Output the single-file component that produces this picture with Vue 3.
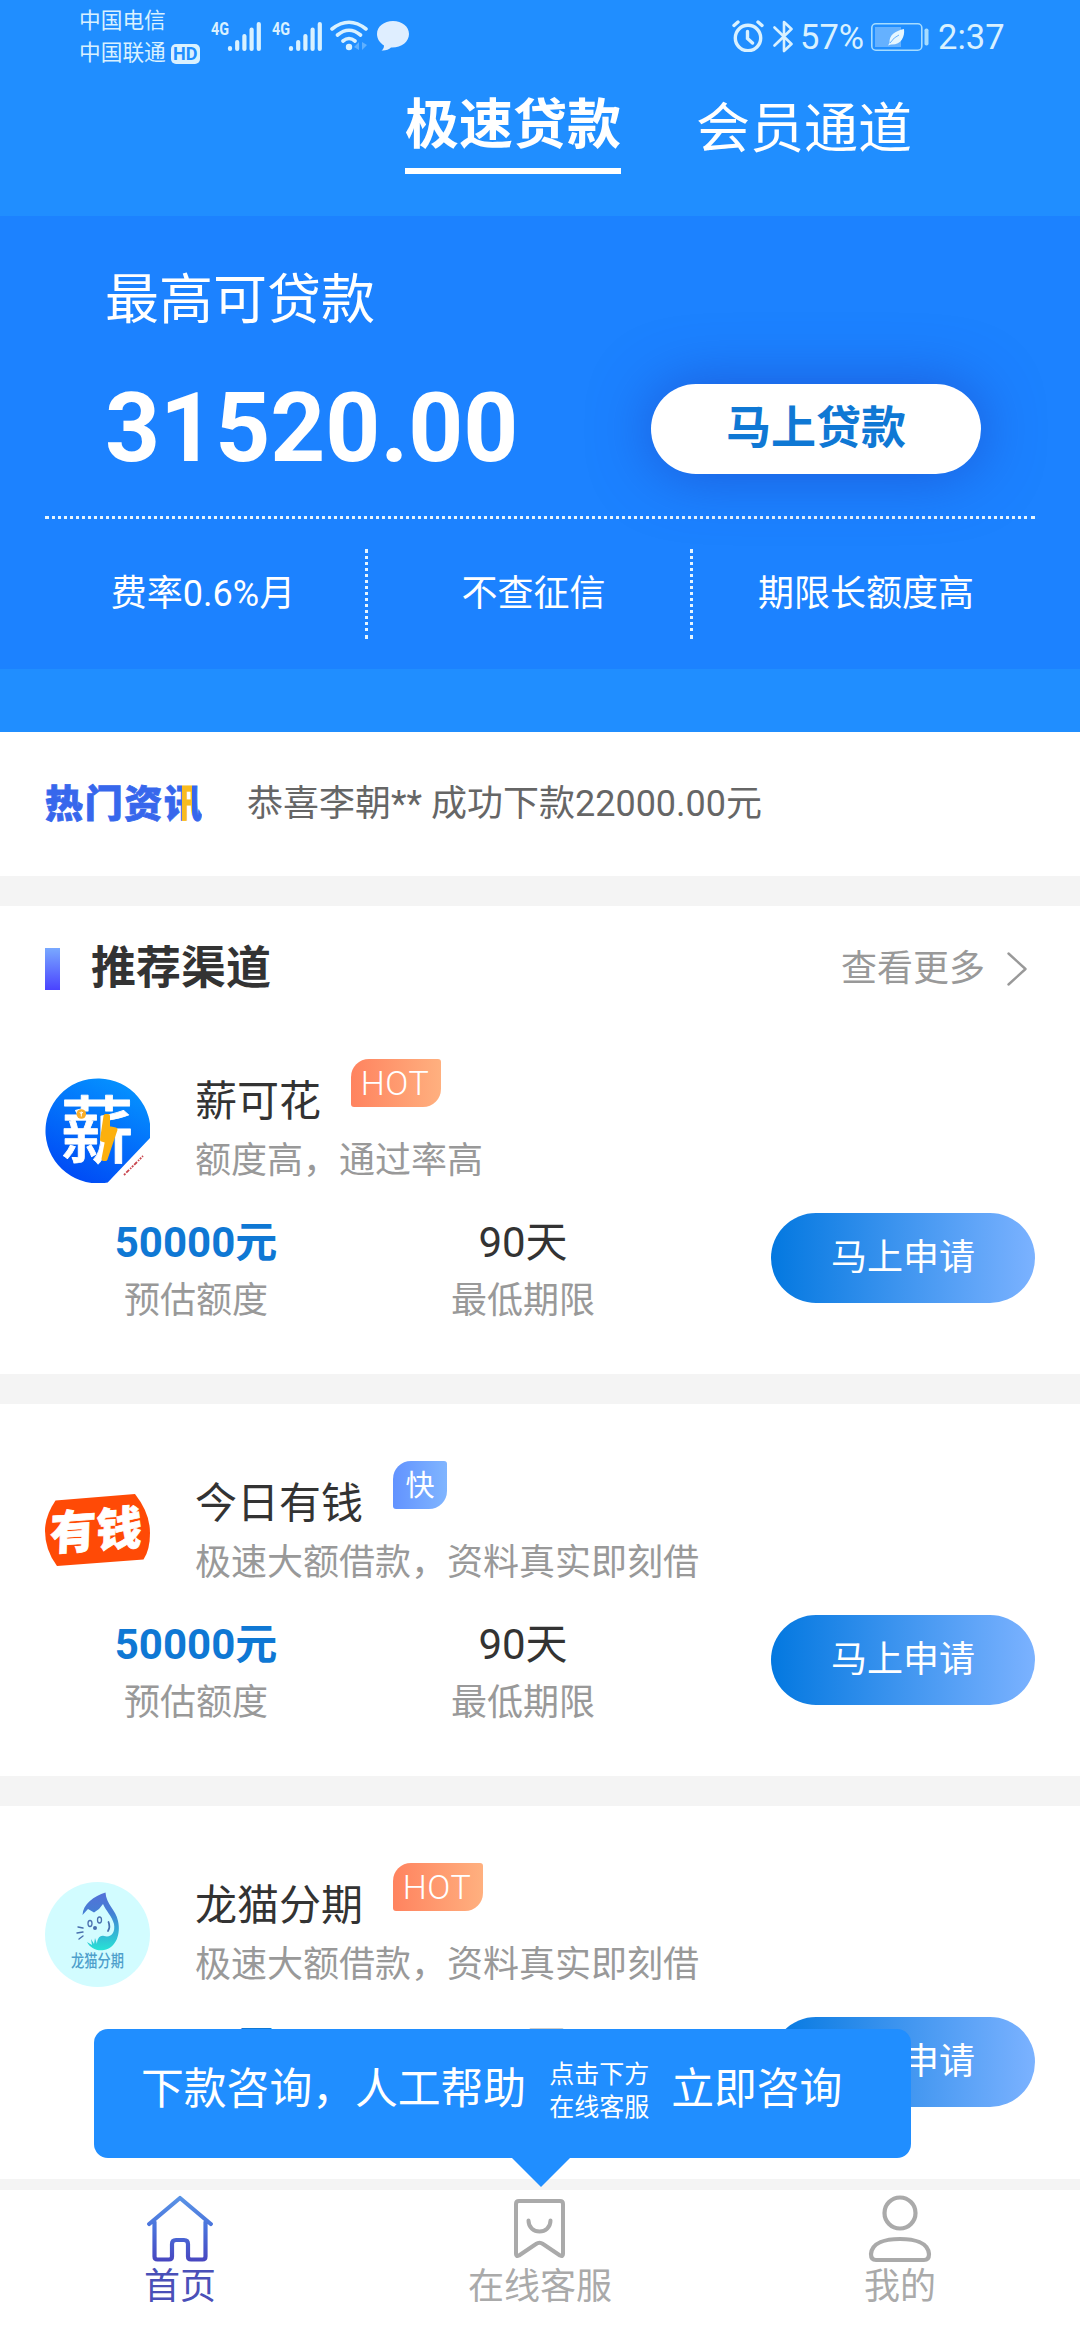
<script setup>
const offers = [
  { id: 'xin', name: '薪可花', tag: 'HOT', tagType: 'hot', desc: '额度高，通过率高', amount: '50000元', term: '90天' },
  { id: 'qian', name: '今日有钱', tag: '快', tagType: 'fast', desc: '极速大额借款，资料真实即刻借', amount: '50000元', term: '90天' },
  { id: 'mao', name: '龙猫分期', tag: 'HOT', tagType: 'hot', desc: '极速大额借款，资料真实即刻借', amount: '50000元', term: '90天' },
]
</script>

<template>
  <div class="screen">
    <header class="top">
      <div class="status">
        <div class="carriers">
          <div class="carrier">中国电信</div>
          <div class="carrier">中国联通<span class="hd">HD</span></div>
        </div>
        <svg v-for="n in 2" :key="n" class="signal" viewBox="0 0 61 42" width="61" height="42">
          <text x="0" y="22" font-size="19" font-weight="700" textLength="18" lengthAdjust="spacingAndGlyphs">4G</text>
          <g stroke="#d9f1ff" stroke-width="4.2" stroke-linecap="round">
            <path d="M19 35v1M26.2 29v7M33.4 23v13M40.6 16.500v19.500M47.800 11v25" />
          </g>
        </svg>
        <svg class="wifi" viewBox="0 0 38 32" width="38" height="32" fill="none" stroke="#d9f1ff" stroke-width="3.600" stroke-linecap="round">
          <path d="M2 9Q19-4.500 36 9M7.500 15Q19 5.500 30.500 15M13 21Q19 16 25 21" />
          <circle cx="19" cy="27" r="3.200" fill="#d9f1ff" stroke="none" />
          <path d="M24 27l5-5v8zM32 22v8l5-5z" fill="#5fb0ff" stroke="none" />
        </svg>
        <svg class="chat" viewBox="0 0 32 31" width="32" height="31">
          <path d="M16 0C7 0 0 5.500 0 13c0 5 3 9 7 11.500C7 27 6 28.500 4.500 29.500 8 30 12 28.500 14 26.500 24 27 32 21 32 13 32 5.500 25 0 16 0z" fill="#dfeeff" />
        </svg>
        <svg class="alarm" viewBox="0 0 32 32" width="32" height="32" fill="none" stroke="#d9f1ff" stroke-width="3.400" stroke-linecap="round">
          <circle cx="16" cy="18" r="12.700" />
          <path d="M15.500 11.500v7l5 4.500M2 5.500l4-3.500M30 5.500L26 2" />
        </svg>
        <svg class="bt" viewBox="0 0 20 33" width="20" height="33" fill="none" stroke="#d9f1ff" stroke-width="2.600" stroke-linejoin="round" stroke-linecap="round">
          <path d="M1.500 7.500L18.500 24 11 31V2l7.500 7L1.500 25.500" />
        </svg>
        <span class="pct">57%</span>
        <svg class="battery" viewBox="0 0 58 28" width="58" height="28">
          <rect x=".8" y=".8" width="50" height="26.400" rx="4" fill="none" stroke="#a6dcff" stroke-width="1.600" />
          <rect x="4" y="4" width="26" height="20" fill="#65b1ff" />
          <path d="M33 6C24 8 18 12 18.500 20l-1.500 2.500 3-1C30 22 34 14 33 6z" fill="#e6f6ff" />
          <path d="M19 20q4-6 9-8" fill="none" stroke="#65b1ff" stroke-width="1" />
          <rect x="53.500" y="5.500" width="4" height="17" rx="1.800" fill="#a6dcff" />
        </svg>
        <span class="clock">2:37</span>
      </div>
      <nav class="tabs">
        <a class="tab active">极速贷款</a>
        <a class="tab">会员通道</a>
      </nav>
    </header>

    <section class="hero">
      <div class="hero-label">最高可贷款</div>
      <div class="hero-row">
        <div class="hero-amount">31520.00</div>
        <button class="hero-btn">马上贷款</button>
      </div>
      <div class="perks">
        <div class="perk first">费率0.6%月</div>
        <div class="perk second">不查征信</div>
        <div class="perk third">期限长额度高</div>
      </div>
    </section>

    <section class="news">
      <svg class="news-logo" viewBox="0 0 157 44" width="157" height="44">
        <defs>
          <linearGradient id="newsFill" gradientUnits="userSpaceOnUse" x1="0" y1="0" x2="157" y2="0">
            <stop offset=".87" stop-color="#3767ec" />
            <stop offset=".87" stop-color="#f8bb20" />
            <stop offset=".935" stop-color="#f8bb20" />
            <stop offset=".935" stop-color="#3767ec" />
          </linearGradient>
        </defs>
        <text x="0" y="34.500" font-size="38" font-weight="900" textLength="157" fill="url(#newsFill)" stroke="url(#newsFill)" stroke-width=".8">热门资讯</text>
      </svg>
      <div class="news-text">恭喜李朝** 成功下款22000.00元</div>
    </section>

    <section class="list">
      <div class="list-head">
        <i class="mark"></i>
        <h2>推荐渠道</h2>
        <span class="more">查看更多</span>
        <svg class="chev" viewBox="0 0 20 34" width="20" height="34" fill="none" stroke="#999" stroke-width="2.400" stroke-linecap="round" stroke-linejoin="round">
          <path d="M1.500 1.500L18.500 17 1.500 32.500" />
        </svg>
      </div>

      <article v-for="o in offers" :key="o.id" class="card">
        <div class="card-top">
          <svg v-if="o.id === 'xin'" class="logo" viewBox="0 0 105 105" width="105" height="105">
            <defs>
              <linearGradient id="xinBg" x1=".25" y1="1" x2=".75" y2="0">
                <stop offset="0" stop-color="#0048f5" />
                <stop offset="1" stop-color="#0594ff" />
              </linearGradient>
            </defs>
            <path d="M105 60A52.500 52.500 0 1 0 62.700 104.500Z" fill="url(#xinBg)" />
            <text x="15.500" y="79" font-size="73" font-weight="500" fill="#fff" stroke="#fff" stroke-width=".8" stroke-linejoin="round">薪</text>
            <circle cx="36.300" cy="36" r="4.800" fill="#f8ae2b" />
            <path d="M36.300 33.500v5M34.800 34l1.500 2 1.500-2" stroke="#fff" stroke-width="1" fill="none" />
            <path d="M60.500 38L63 38 63 50 70.500 51.500 60.500 81 58.500 81 62 63 57 61.500Z" fill="#fcb00e" stroke="#fcb00e" stroke-width="4" stroke-linejoin="round" />
            <path d="M79 97L98 78" stroke="#c9474f" stroke-width="1.800" stroke-dasharray="2 1.200 4 1.500 1.500 1" />
          </svg>
          <svg v-else-if="o.id === 'qian'" class="logo" viewBox="0 0 105 105" width="105" height="105">
            <path d="M10.500 20.500L90 14Q105 33 105 53 105 70 98.500 79.500L12 86Q0 70 0 51 0 36 10.500 20.500Z" fill="#ff4a06" />
            <g transform="rotate(-4 52 52) skewX(-6)">
              <text x="10.500" y="67" font-size="46" font-weight="900" fill="#fff" stroke="#fff" stroke-width=".8">有钱</text>
            </g>
          </svg>
          <svg v-else class="logo" viewBox="0 0 105 105" width="105" height="105">
            <defs>
              <linearGradient id="maoDrop" x1="0" y1="0" x2="0" y2="1">
                <stop offset="0" stop-color="#5470d8" />
                <stop offset=".35" stop-color="#447fd4" />
                <stop offset="1" stop-color="#27e3d6" />
              </linearGradient>
            </defs>
            <circle cx="52.500" cy="52.500" r="52.500" fill="#d2fcff" />
            <path d="M60.500 10.500C49 14 38 22 37.500 33L43 27 49 30.500 54 27 58 22C61 29 67 34 69 42 70.500 51 66 56 59 54 54 53 52 58 52 62L50 56 49 62 46 57 47 63 42 60C45 66 52 69.500 59 68 71 66 76 52 73 39 71 28 61 22 60.500 10.500Z" fill="url(#maoDrop)" />
            <g fill="none" stroke="#496fae" stroke-width="1.400" stroke-linecap="round">
              <path d="M33 45l5 1M32 51l6-1M34 57l4-3" />
              <path d="M63 49q2.500-4 .5-9" stroke-width="1.800" />
            </g>
            <ellipse cx="45" cy="41.500" rx="2" ry="3" fill="none" stroke="#496fae" stroke-width="1.300" />
            <ellipse cx="54.500" cy="38" rx="2" ry="3" fill="none" stroke="#496fae" stroke-width="1.300" />
            <circle cx="50" cy="46" r="2" fill="#496fae" />
            <text x="26" y="84.500" font-size="16.500" font-weight="500" textLength="53" lengthAdjust="spacingAndGlyphs" fill="#4e9fcb">龙猫分期</text>
          </svg>
          <div class="card-title">
            <div class="name-row">
              <span class="name">{{ o.name }}</span>
              <span class="tag" :class="o.tagType">{{ o.tag }}</span>
            </div>
            <div class="desc">{{ o.desc }}</div>
          </div>
        </div>
        <div class="card-bottom">
          <div class="stat amount">
            <div class="value">{{ o.amount }}</div>
            <div class="label">预估额度</div>
          </div>
          <div class="stat term">
            <div class="value">{{ o.term }}</div>
            <div class="label">最低期限</div>
          </div>
          <button class="apply">马上申请</button>
        </div>
      </article>
    </section>

    <aside class="tip">
      <span class="tip-main">下款咨询，人工帮助</span>
      <span class="tip-small">点击下方<br />在线客服</span>
      <span class="tip-main">立即咨询</span>
      <svg class="tip-arrow" viewBox="0 0 60 30" width="60" height="30"><path d="M0 0H60L30 30Z" fill="#208eff" /></svg>
    </aside>

    <footer class="bottom-nav">
      <div class="nav-item current">
        <svg viewBox="0 0 66 68" width="66" height="68" fill="none" stroke="url(#homeStroke)" stroke-width="4.200" stroke-linecap="round" stroke-linejoin="round">
          <defs>
            <linearGradient id="homeStroke" gradientUnits="userSpaceOnUse" x1="0" y1="0" x2="0" y2="66">
              <stop offset="0" stop-color="#5b96e6" />
              <stop offset=".5" stop-color="#4a72dc" />
              <stop offset="1" stop-color="#4847c0" />
            </linearGradient>
          </defs>
          <path d="M2.200 29L33 3 63.800 29M7.500 27v34.500q0 3 3 3H22q3 0 3-3V49q0-4 4-4h8q4 0 4 4v12.500q0 3 3 3h11.500q3 0 3-3V27" />
        </svg>
        <span>首页</span>
      </div>
      <div class="nav-item">
        <svg viewBox="0 0 66 68" width="66" height="68" fill="none" stroke="#aaa" stroke-width="4" stroke-linecap="round" stroke-linejoin="round">
          <path d="M12 6h41q3 0 3 3V59q0 3-3 1.500L36 49q-3.500-2.500-7 0L12 60.500Q9 62 9 59V9q0-3 3-3zM21.500 25.500c0 14.500 22 14.500 22 0" />
        </svg>
        <span>在线客服</span>
      </div>
      <div class="nav-item">
        <svg viewBox="0 0 66 68" width="66" height="68" fill="none" stroke="#aaa" stroke-width="4.200" stroke-linejoin="round">
          <circle cx="33" cy="18" r="15.500" />
          <path d="M9 65h48q5 0 5-6C61 47.500 47 44 33 44S5 47.500 4 59q0 6 5 6z" />
        </svg>
        <span>我的</span>
      </div>
    </footer>
  </div>
</template>

<style>
body {
  margin: 0;
  background: #fff;
}
</style>

<style scoped>
.screen {
  position: relative;
  width: 1080px;
  height: 2340px;
  overflow: hidden;
  background: #fff;
  color: #333;
  font-family: Roboto, "Noto Sans CJK SC", sans-serif;
  display: flex;
  flex-direction: column;
}
.screen * { box-sizing: border-box; }
svg { display: block; flex: none; }
button { border: 0; padding: 0; font-family: inherit; flex: none; }

.top {
  flex: none;
  height: 216px;
  background: #208eff;
}
.status {
  height: 75px;
  padding-left: 79px;
  display: flex;
  align-items: flex-start;
  color: #d9f1ff;
}
.carriers {
  width: 132px;
  padding-top: 5px;
  font-size: 21.700px;
  line-height: 32px;
}
.carrier { height: 32px; display: flex; align-items: center; white-space: nowrap; }
.hd {
  width: 29px;
  height: 20px;
  margin: 1px 0 0 5px;
  border-radius: 5px;
  background: #d9f1ff;
  color: #208eff;
  font-size: 18px;
  font-weight: 700;
  line-height: 20px;
  text-align: center;
}
.signal { margin-top: 13px; fill: #d9f1ff; overflow: visible; }
.wifi { margin: 20px 0 0 -3px; }
.chat { margin: 21px 0 0 9px; }
.alarm { margin: 20px 0 0 323px; }
.bt { margin: 20px 0 0 9px; }
.pct, .clock { font-size: 34.500px; line-height: 40px; margin-top: 17px; }
.pct { width: 78px; padding-left: 7px; flex: none; }
.battery { margin-top: 23px; }
.clock { margin-left: 9px; }

.tabs {
  display: flex;
  gap: 75px;
  padding-left: 405px;
  color: #fff;
}
.tab {
  height: 105px;
  font-size: 54px;
  line-height: 110px;
}
.tab.active {
  height: 99px;
  line-height: 101px;
  font-weight: 700;
  border-bottom: 6px solid #fff;
}

.hero {
  flex: none;
  height: 516px;
  padding: 48px 45px 0;
  color: #fff;
  background: linear-gradient(#1c82ff 453px, #208eff 453px);
}
.hero-label {
  padding-left: 60px;
  height: 72px;
  line-height: 74px;
  font-size: 54px;
}
.hero-row {
  height: 183px;
  display: flex;
  justify-content: space-between;
  padding: 48px 54px 0 60px;
  border-bottom: 3px dotted #e6f5ff;
}
.hero-amount {
  font-size: 96px;
  line-height: 88px;
  font-weight: 700;
}
.hero-btn {
  width: 330px;
  height: 90px;
  border-radius: 45px;
  background: #fff;
  color: #0f78d4;
  font-size: 45px;
  font-weight: 700;
  line-height: 90px;
  box-shadow: 0 0 60px rgba(28, 62, 190, .6);
}
.perks {
  display: flex;
  padding-top: 30px;
}
.perk {
  height: 90px;
  line-height: 90px;
  font-size: 36px;
  text-align: center;
}
.perk.first { width: 323px; padding-right: 4px; border-right: 3px dotted #e6f5ff; }
.perk.second { width: 325px; padding-left: 9px; border-right: 3px dotted #e6f5ff; }
.perk.third { width: 342px; padding-left: 4px; }

.news {
  flex: none;
  height: 174px;
  display: flex;
  align-items: center;
  padding: 0 45px;
  border-bottom: 30px solid #f4f4f4;
}
.news-text {
  margin-left: 45px;
  font-size: 36px;
  line-height: 54px;
  color: #666;
}

.list-head {
  height: 129px;
  display: flex;
  align-items: center;
  padding: 0 53px 3px 45px;
}
.mark {
  width: 15px;
  height: 42px;
  background: linear-gradient(#79a9ff, #4a43ff);
}
h2 {
  margin: 0 auto 0 31px;
  font-size: 45px;
  line-height: 60px;
}
.more { font-size: 36px; line-height: 54px; color: #999; }
.chev { margin-left: 22px; }

.card {
  height: 402px;
  border-bottom: 30px solid #f4f4f4;
  padding: 42px 45px 0;
}
.card:nth-of-type(1) { height: 369px; padding-top: 9px; }
.card:nth-of-type(3) { height: 403px; }
.card-top { display: flex; height: 153px; }
.logo { margin-top: 34px; }
.card-title { margin-left: 45px; }
.name-row { height: 86px; display: flex; align-items: flex-start; }
.name { font-size: 42px; line-height: 60px; margin-top: 28px; }
.tag {
  height: 48px;
  margin: 15px 0 0 30px;
  border-radius: 18px 3px 18px 3px;
  color: #fff;
  line-height: 48px;
  text-align: center;
}
.tag.hot {
  width: 90px;
  padding-right: 2px;
  font-size: 34px;
  font-weight: 300;
  letter-spacing: .6px;
  background: linear-gradient(90deg, #ff835f, #ffb07f);
}
.tag.fast { width: 54px; font-size: 29px; line-height: 50px; background: linear-gradient(90deg, #6293ff, #80b5ff); }
.desc { font-size: 36px; line-height: 54px; color: #999; margin-top: 4px; }
.card-bottom { display: flex; }
.stat { text-align: center; }
.amount { width: 302px; }
.term { width: 352px; }
.value { font-size: 42px; line-height: 60px; padding-top: 16px; }
.amount .value { color: #0f78d4; font-weight: 700; }
.label { font-size: 36px; line-height: 54px; color: #999; padding-top: 1px; }
.apply {
  width: 264px;
  height: 90px;
  margin: 16px 0 0 72px;
  border-radius: 45px;
  background: linear-gradient(90deg, #0378e0, #7bb2ff);
  color: #fff;
  font-size: 36px;
  line-height: 90px;
}

.tip {
  position: absolute;
  z-index: 2;
  left: 94px;
  top: 2029px;
  width: 817px;
  height: 129px;
  border-radius: 14px;
  background: #208eff;
  color: #fff;
  display: flex;
  align-items: center;
  padding: 0 0 10px 47px;
  white-space: nowrap;
}
.tip-main { font-size: 42.800px; line-height: 60px; }
.tip-small { font-size: 25px; line-height: 33px; margin: 5px 22px 0 23px; }
.tip-arrow { position: absolute; left: 417px; top: 128px; }

.bottom-nav {
  position: absolute;
  left: 0;
  bottom: 0;
  width: 1080px;
  height: 150px;
  background: #fff;
  display: flex;
}
.nav-item {
  flex: 1;
  display: flex;
  flex-direction: column;
  align-items: center;
  padding-top: 5px;
  font-size: 36px;
  line-height: 48px;
  color: #aaa;
}
.nav-item.current { color: #4a50b8; }
</style>
